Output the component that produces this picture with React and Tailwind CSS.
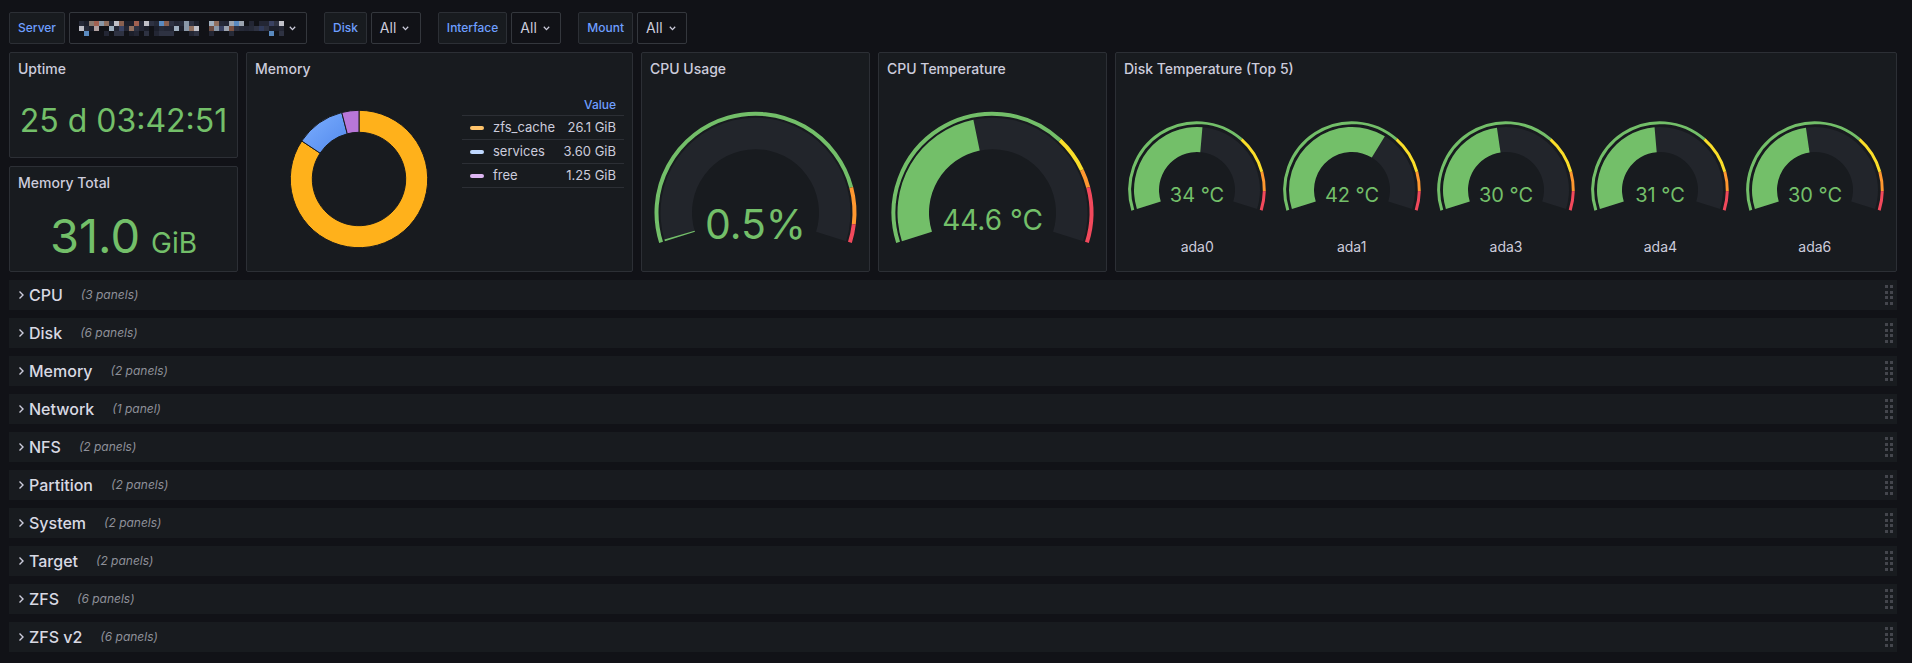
import React from 'react';

const GREEN = '#73bf69';
const YELLOW = '#fade2a';
const ORANGE = '#ff9830';
const RED = '#f2495c';

const rad = (d) => ((d - 90) * Math.PI) / 180;
const pt = (cx, cy, r, d) => [cx + r * Math.cos(rad(d)), cy + r * Math.sin(rad(d))];

function bandPath(cx, cy, ro, ri, a0, a1) {
  const large = a1 - a0 > 180 ? 1 : 0;
  const [x0, y0] = pt(cx, cy, ro, a0);
  const [x1, y1] = pt(cx, cy, ro, a1);
  const [x2, y2] = pt(cx, cy, ri, a1);
  const [x3, y3] = pt(cx, cy, ri, a0);
  return `M${x0} ${y0}A${ro} ${ro} 0 ${large} 1 ${x1} ${y1}L${x2} ${y2}A${ri} ${ri} 0 ${large} 0 ${x3} ${y3}Z`;
}

function arcPath(cx, cy, r, a0, a1) {
  const large = a1 - a0 > 180 ? 1 : 0;
  const [x0, y0] = pt(cx, cy, r, a0);
  const [x1, y1] = pt(cx, cy, r, a1);
  return `M${x0} ${y0}A${r} ${r} 0 ${large} 1 ${x1} ${y1}`;
}

const SWEEP = 107.5;
const ang = (f) => -SWEEP + f * 2 * SWEEP;

function Gauge({ w, h, cx, cy, ringR, ringW, bo, bi, frac, th, text, fs, ty }) {
  return (
    <svg width={w} height={h} className="block">
      {th.map(([f, c], i) => (
        <path
          key={i}
          d={arcPath(cx, cy, ringR, ang(f), ang(i < th.length - 1 ? th[i + 1][0] : 1))}
          stroke={c}
          strokeWidth={ringW}
          fill="none"
        />
      ))}
      <path d={bandPath(cx, cy, bo, bi, -SWEEP, SWEEP)} fill="#22252b" />
      <path d={bandPath(cx, cy, bo, bi, -SWEEP, ang(frac))} fill={GREEN} />
      <text x={cx} y={cy + ty} textAnchor="middle" fontSize={fs} fill={GREEN}>
        {text}
      </text>
    </svg>
  );
}

function Panel({ title, className = '', children }) {
  return (
    <div className={`bg-[#181b1f] border border-[#2c2f35] rounded-[2px] flex flex-col overflow-hidden ${className}`}>
      <div className="h-8 shrink-0 px-2 flex items-center text-sm font-medium text-[#ccccdc]">{title}</div>
      {children}
    </div>
  );
}

function Donut() {
  const data = [
    { v: 26.1, c: '#ffb11b' },
    { v: 3.6, c: 'url(#svcGrad)' },
    { v: 1.25, c: '#b877d9' },
  ];
  const total = data.reduce((a, b) => a + b.v, 0);
  let acc = 0;
  const cx = 70, cy = 70;
  return (
    <svg width="140" height="140" className="block">
      <defs>
        <linearGradient id="svcGrad" x1="0" y1="0" x2="1" y2="1">
          <stop offset="0" stopColor="#7eb0ff" />
          <stop offset="1" stopColor="#5188ec" />
        </linearGradient>
      </defs>
      {data.map((d, i) => {
        const a0 = (acc / total) * 360;
        acc += d.v;
        const a1 = (acc / total) * 360;
        return <path key={i} d={bandPath(cx, cy, 68.7, 46.7, a0, a1)} fill={d.c} stroke="#181b1f" strokeWidth="1" />;
      })}
    </svg>
  );
}

let seed = 7;
const rnd = () => {
  seed = (seed * 9301 + 49297) % 233280;
  return seed / 233280;
};
const LIGHT = ['#8a98a8', '#9ca4b0', '#a0b0c0', '#c0c0c8', '#7a5040', '#8a6050', '#5a8ac0', '#907060', '#b0a0a0', '#6a4a40', '#a06050', '#707080', '#8a7a70', '#5a2a3a', '#3a4262', '#303a5a'];
const DARK = ['#1c1f2b', '#232634', '#262a38', '#2e3242'];
const MOSAIC = [];
for (let col = 0; col < 41; col++) {
  if (col === 24 || col === 25) continue;
  for (let row = 0; row < 3; row++) {
    const r = rnd();
    if (row === 2) {
      if (r < 0.35) MOSAIC.push({ x: col * 5, y: row * 5, c: DARK[Math.floor(rnd() * DARK.length)] });
      else if (r < 0.42) MOSAIC.push({ x: col * 5, y: row * 5, c: '#5a8ac0' });
      continue;
    }
    if (r < 0.45) MOSAIC.push({ x: col * 5, y: row * 5, c: LIGHT[Math.floor(rnd() * LIGHT.length)] });
    else if (r < 0.9) MOSAIC.push({ x: col * 5, y: row * 5, c: DARK[Math.floor(rnd() * DARK.length)] });
  }
}

function Chevron() {
  return (
    <svg width="7" height="5" viewBox="0 0 7 5" className="block">
      <path d="M0.8 0.8 L3.5 3.6 L6.2 0.8" stroke="#ccccdc" strokeWidth="1.3" fill="none" />
    </svg>
  );
}

function VarLabel({ children, className = '' }) {
  return (
    <div className={`h-8 px-2 flex items-center border border-[#2c2f35] bg-[#181b1f] rounded-[2px] text-xs font-medium text-[#6e9fff] ${className}`}>
      {children}
    </div>
  );
}

function AllDrop() {
  return (
    <div className="ml-1 h-8 w-[50px] pl-2 flex items-center gap-[6px] border border-[#34373d] bg-[#111217] rounded-[2px] text-sm text-[#ccccdc]">
      <span>All</span>
      <Chevron />
    </div>
  );
}

const ROWS = [
  ['CPU', '3 panels'],
  ['Disk', '6 panels'],
  ['Memory', '2 panels'],
  ['Network', '1 panel'],
  ['NFS', '2 panels'],
  ['Partition', '2 panels'],
  ['System', '2 panels'],
  ['Target', '2 panels'],
  ['ZFS', '6 panels'],
  ['ZFS v2', '6 panels'],
];

const DISKS = [
  ['ada0', 34],
  ['ada1', 42],
  ['ada3', 30],
  ['ada4', 31],
  ['ada6', 30],
];

export default function App() {
  return (
    <div className="min-h-screen w-full bg-[#111217] font-[family-name:Inter,sans-serif] pl-[9px] pr-[15px] pt-[12px]">
      {/* variables bar */}
      <div className="flex items-center h-8">
        <VarLabel>Server</VarLabel>
        <div className="ml-1 h-8 w-[238px] flex items-center border border-[#34373d] bg-[#111217] rounded-[2px]">
          <svg width="205" height="15" className="block ml-[9px]">
            {MOSAIC.map((m, i) => (
              <rect key={i} x={m.x} y={m.y} width="5" height="5" fill={m.c} />
            ))}
          </svg>
          <div className="ml-[5px]">
            <Chevron />
          </div>
        </div>
        <VarLabel className="ml-[17px]">Disk</VarLabel>
        <AllDrop />
        <VarLabel className="ml-[17px]">Interface</VarLabel>
        <AllDrop />
        <VarLabel className="ml-[17px]">Mount</VarLabel>
        <AllDrop />
      </div>

      {/* panels grid */}
      <div className="mt-2 grid grid-cols-[229px_387px_229px_229px_782px] grid-rows-[106px_106px] gap-2">
        <Panel title="Uptime" className="col-start-1 row-start-1">
          <div className="flex-1 flex items-center justify-center text-[32px] leading-none text-[#73bf69]">
            25 d 03:42:51
          </div>
        </Panel>
        <Panel title="Memory Total" className="col-start-1 row-start-2">
          <div className="flex-1 flex items-center justify-center text-[#73bf69]">
            <div className="flex items-baseline leading-none">
              <span className="text-[47px]">31.0</span>
              <span className="text-[28px] ml-[11px]">GiB</span>
            </div>
          </div>
        </Panel>
        <Panel title="Memory" className="col-start-2 row-start-1 row-span-2">
          <div className="flex-1 flex px-2">
            <div className="flex-1 flex items-center justify-center pt-[1px]">
              <Donut />
            </div>
            <div className="w-[162px] pt-[9px] text-xs text-[#ccccdc]">
              <div className="h-[22px] pr-2 flex items-center justify-end border-b border-[#2c2f35] font-medium text-[#6e9fff]">
                Value
              </div>
              {[
                ['zfs_cache', '26.1 GiB', '#ffc46b'],
                ['services', '3.60 GiB', '#c0d8ff'],
                ['free', '1.25 GiB', '#deb6f2'],
              ].map(([n, v, c]) => (
                <div key={n} className="h-[24px] pl-2 pr-2 flex items-center border-b border-[#2c2f35] text-[13px]">
                  <span className="w-[14px] h-[4px] rounded-full" style={{ backgroundColor: c }} />
                  <span className="ml-[9px] flex-1">{n}</span>
                  <span>{v}</span>
                </div>
              ))}
            </div>
          </div>
        </Panel>
        <Panel title="CPU Usage" className="col-start-3 row-start-1 row-span-2">
          <div className="flex-1 px-2">
            <Gauge
              w={211}
              h={178}
              cx={105.5}
              cy={127.7}
              ringR={99}
              ringW={4}
              bo={95}
              bi={63.5}
              frac={0.005}
              th={[[0, GREEN], [0.85, ORANGE], [0.95, RED]]}
              text="0.5%"
              fs={41}
              ty={26.6}
            />
          </div>
        </Panel>
        <Panel title="CPU Temperature" className="col-start-4 row-start-1 row-span-2">
          <div className="flex-1 px-2">
            <Gauge
              w={211}
              h={178}
              cx={105.5}
              cy={127.7}
              ringR={99}
              ringW={4}
              bo={95}
              bi={63.5}
              frac={0.446}
              th={[[0, GREEN], [0.7, YELLOW], [0.8, ORANGE], [0.85, RED]]}
              text="44.6 °C"
              fs={28}
              ty={17.5}
            />
          </div>
        </Panel>
        <Panel title="Disk Temperature (Top 5)" className="col-start-5 row-start-1 row-span-2">
          <div className="flex-1 flex px-[4px]">
            {DISKS.map(([n, v]) => (
              <div key={n} className="flex-1 flex flex-col items-center">
                <Gauge
                  w={154}
                  h={130}
                  cx={77}
                  cy={105}
                  ringR={67.3}
                  ringW={3}
                  bo={63}
                  bi={38}
                  frac={v / 65}
                  th={[[0, GREEN], [45 / 65, YELLOW], [55 / 65, ORANGE], [60 / 65, RED]]}
                  text={`${v} °C`}
                  fs={20}
                  ty={12.3}
                />
                <div className="mt-[22px] h-5 leading-5 text-sm text-[#ccccdc]">{n}</div>
              </div>
            ))}
          </div>
        </Panel>
      </div>

      {/* collapsed rows */}
      <div className="mt-2 flex flex-col gap-2 pb-[11px]">
        {ROWS.map(([t, c]) => (
          <div key={t} className="h-[30px] bg-[#181b1f] flex items-center pl-2 pr-[4px]">
            <svg width="8" height="10" viewBox="0 0 8 10" className="block ml-[1px]">
              <path d="M1.5 1.5 L5 5 L1.5 8.5" stroke="#ccccdc" strokeWidth="1.4" fill="none" />
            </svg>
            <span className="ml-[3px] text-base font-medium text-[#d8d9e3]">{t}</span>
            <span className="ml-[18px] text-xs italic text-[#8e9099]">({c})</span>
            <div className="ml-auto grid grid-cols-2 gap-x-[2px] gap-y-[2.5px]">
              {Array.from({ length: 8 }).map((_, i) => (
                <div key={i} className="w-[3px] h-[3px] bg-[#44464d]" />
              ))}
            </div>
          </div>
        ))}
      </div>
    </div>
  );
}
